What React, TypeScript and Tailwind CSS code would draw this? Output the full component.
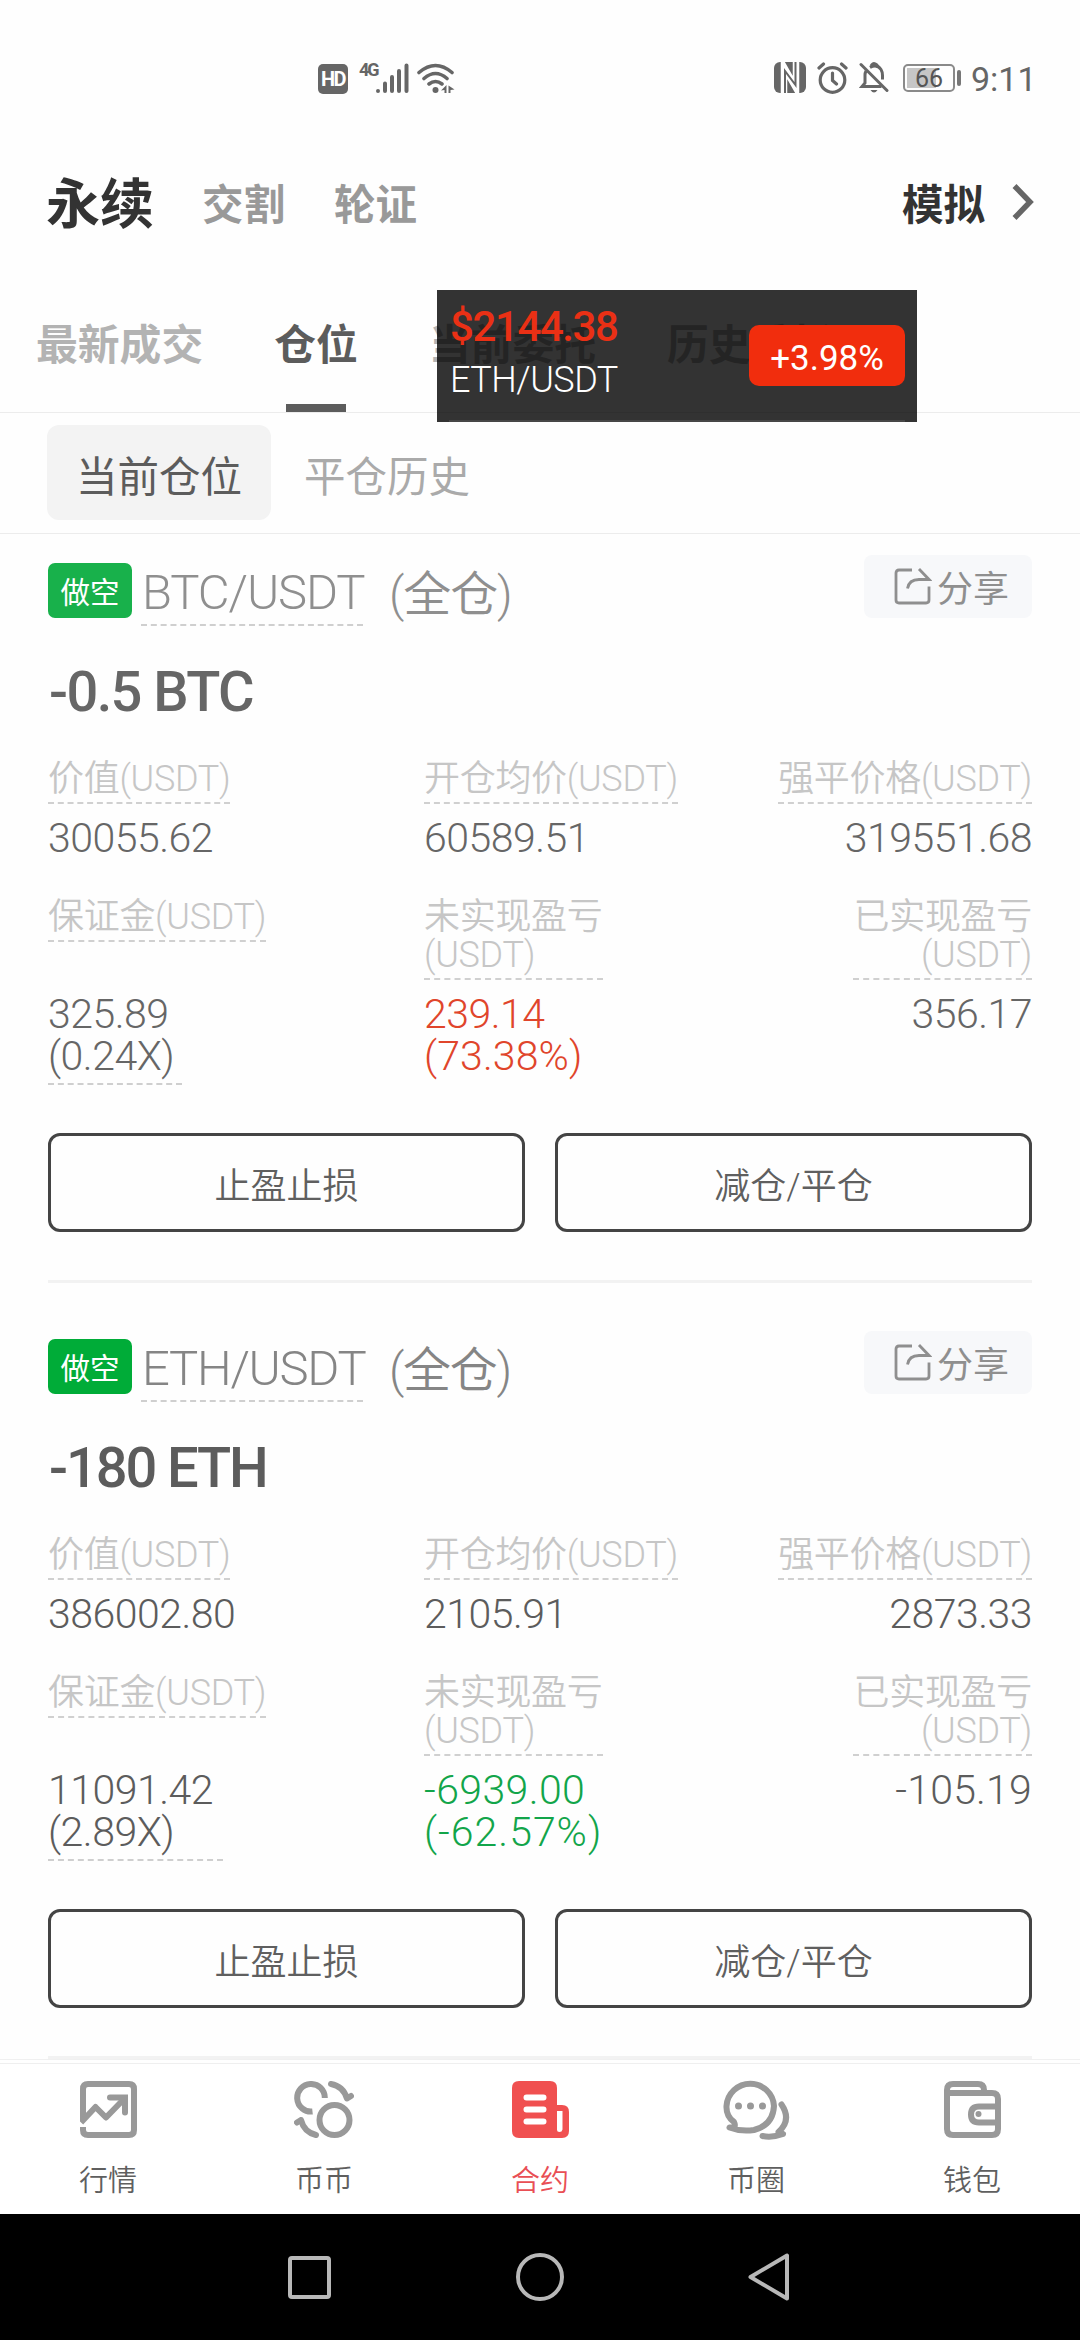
import { ReactNode } from 'react';

type Position = {
  pair: string;
  amount: string;
  badgeClass: string;
  value: string;
  entryPrice: string;
  liqPrice: string;
  margin: string;
  leverage: string;
  marginClass: string;
  unrealized: string;
  unrealizedRate: string;
  pnlClass: string;
  rateClass: string;
  realized: string;
  realizedClass: string;
  pairClass: string;
  amountClass: string;
  numberClass: string;
};

const positions: Position[] = [
  {
    pair: 'BTC/USDT',
    amount: '-0.5 BTC',
    badgeClass: 'bg-[#18b14b]',
    value: '30055.62',
    entryPrice: '60589.51',
    liqPrice: '319551.68',
    margin: '325.89',
    leverage: '(0.24X)',
    marginClass: 'w-[134px]',
    unrealized: '239.14',
    unrealizedRate: '(73.38%)',
    pnlClass: 'text-[#e0452b]',
    rateClass: 'tracking-[0.1px]',
    realized: '356.17',
    realizedClass: '',
    pairClass: 'text-[#8f8f8f] tracking-[-1.1px]',
    amountClass: 'text-[#666] tracking-[-1.6px]',
    numberClass: 'text-[#666]',
  },
  {
    pair: 'ETH/USDT',
    amount: '-180 ETH',
    badgeClass: 'bg-[#00ac38]',
    value: '386002.80',
    entryPrice: '2105.91',
    liqPrice: '2873.33',
    margin: '11091.42',
    leverage: '(2.89X)',
    marginClass: 'w-[175px]',
    unrealized: '-6939.00',
    unrealizedRate: '(-62.57%)',
    pnlClass: 'text-[#12a54a] tracking-[0.4px]',
    rateClass: 'tracking-[1px]',
    realized: '-105.19',
    realizedClass: 'tracking-[0.2px]',
    pairClass: 'text-[#858585] tracking-[-1.3px]',
    amountClass: 'text-[#5c5c5c] tracking-[-2.1px]',
    numberClass: 'text-[#5c5c5c]',
  },
];

function StatusBar() {
  return (
    <div className="flex h-[110px] items-start pt-[62px] text-[#666]">
      <div className="ml-[318px] mt-[2px] flex h-[30px] w-[30px] items-center justify-center rounded-[5px] bg-[#666] text-[20px] font-bold leading-none tracking-[-1.5px] text-white">
        HD
      </div>
      <span className="ml-[11px] w-[17px] text-[18px] font-bold leading-[15px] tracking-[-2px]">4G</span>
      <svg className="mt-px" width="33" height="31" viewBox="0 0 33 31" stroke="currentColor" strokeWidth="4" strokeLinecap="round">
        <path d="M2 28v0M9 28V20.500M16 28V14M23 28V8M30.500 28V2.500" />
      </svg>
      <svg className="ml-[8px] mt-px" width="38" height="31" viewBox="0 0 38 31" fill="none" stroke="currentColor" strokeWidth="3.600" strokeLinecap="round">
        <path d="M2 9.500Q18.500-4.500 35 9.500M7 15.500Q18.500 5.500 30 15.500M12 21Q18.500 16 25 21" />
        <circle cx="18.500" cy="27" r="3" fill="currentColor" stroke="none" />
        <path d="M24 27.500l5.500-5.500v8h-2v-3zM31.500 22.500v7.500h2v-3l4 -.5z" fill="currentColor" stroke="none" />
      </svg>
      {/* NFC */}
      <svg className="ml-[319px]" width="32" height="32" viewBox="0 0 32 32" fill="none">
        <rect width="32" height="31" rx="6" fill="#666" />
        <path d="M10 31V5L22 26V0" stroke="#fff" strokeWidth="6.500" />
        <path d="M11 31V9L21.500 23V0" stroke="#666" strokeWidth="2" />
      </svg>
      <svg className="ml-[11px]" width="31" height="32" viewBox="0 0 31 32" fill="none" stroke="currentColor" strokeWidth="3.200" strokeLinecap="round">
        <circle cx="15.500" cy="18" r="12.300" />
        <path d="M15.500 11v7.500l4 3.500M2 6l4.500-4M29 6l-4.500-4" />
      </svg>
      <svg className="ml-[11px]" width="31" height="32" viewBox="0 0 31 32" fill="none" stroke="currentColor" strokeWidth="3">
        <path d="M2 2.500L28 28.500" strokeLinecap="round" />
        <path d="M22.500 24.500H3l3-3.500V13q0-2 1-4M11 5.500q7-4 11 2q1.500 2.500 1.500 6v4" />
        <path d="M12 4q1.500-3.500 4.500-2t1 3" />
        <path d="M11.500 28h7q-3.500 5-7 0z" fill="currentColor" stroke="none" />
      </svg>
      <div className="ml-[13px] mt-[2px] flex h-[28px] w-[52px] items-center rounded-[5px] border-2 border-[#8a8a8a] p-[2px]">
        <div className="h-full w-[29px] shrink-0 bg-[#c6c6c6]" />
        <span className="-ml-[21px] text-[25px] leading-none text-[#555]">66</span>
      </div>
      <div className="ml-[2px] mt-[8px] h-[16px] w-[4px] rounded-sm bg-[#777]" />
      <span className="ml-[10px] text-[34px] leading-[34px]">9:11</span>
    </div>
  );
}

function Header() {
  return (
    <div className="flex h-[188px] items-center pl-[46px] pr-[46px] pt-1 font-bold">
      <span className="text-[54px] leading-none text-[#333]">永续</span>
      <span className="ml-[48px] text-[41.500px] leading-none text-[#999]">交割</span>
      <span className="ml-[49px] text-[41.500px] leading-none text-[#999]">轮证</span>
      <span className="ml-auto text-[41.500px] leading-none text-[#333]">模拟</span>
      <svg className="-mt-[8px] ml-[27px]" width="22" height="36" viewBox="0 0 22 36" fill="none" stroke="#666" strokeWidth="5.500">
        <path d="M2.500 2L18 18L2.500 34" />
      </svg>
    </div>
  );
}

function Tab({ label, active = false }: { label: string; active?: boolean }) {
  return (
    <div className="flex shrink-0 flex-col items-center">
      <span className={`flex h-[92px] items-center pt-1 text-[41.800px] font-bold leading-none ${active ? 'text-[#5c5c5c]' : 'text-[#b3b3b3]'}`}>
        {label}
      </span>
      {active && <div className="mt-[14px] h-2 w-[60px] bg-[#5c5c5c]" />}
    </div>
  );
}

function PriceFloat() {
  return (
    <div className="absolute left-[437px] top-[290px] flex h-[132px] w-[480px] flex-col bg-black/80 px-3">
      <div className="flex flex-1 items-center justify-between">
        <div className="-mt-1 flex flex-col pl-[1px]">
          <span className="text-[42px] font-medium leading-[53px] tracking-[-1.4px] text-[#ea3015]">$2144.38</span>
          <span className="text-[36px] font-light leading-[54px] tracking-[-0.5px] text-white">ETH/USDT</span>
        </div>
        <div className="flex h-[61px] w-[156px] items-center justify-center rounded-[10px] bg-[#f12d0d] pt-[6px] text-[35px] leading-none text-white">
          +3.98%
        </div>
      </div>
      <div className="h-[2px] bg-[#474747]" />
    </div>
  );
}

function ShareButton() {
  return (
    <div className="ml-auto flex h-[63px] w-[168px] items-center rounded-lg bg-[#f7f8fa] pl-[30px] text-[#8f8f8f]">
      <svg className="-mt-[1px]" width="38" height="37" viewBox="0 0 38 37" fill="none" stroke="currentColor" strokeWidth="2.800">
        <path d="M18 2H5q-3 0-3 3v27q0 3 3 3h27q3 0 3-3V18.500" />
        <path d="M13.500 20.500Q15 11.500 25 11.500h10L25 1" />
      </svg>
      <span className="ml-[5px] pt-[7px] text-[36px] leading-none">分享</span>
    </div>
  );
}

function Label({ children, right = false }: { children: ReactNode; right?: boolean }) {
  return (
    <div
      className={`self-start border-b-2 border-dashed border-[#d0d0d0] pb-1 pt-px text-[36px] font-[350] leading-[38px] tracking-[-0.3px] text-[#c6c6c6] ${
        right ? 'justify-self-end text-right' : 'justify-self-start'
      }`}
    >
      {children}
    </div>
  );
}

function PositionCard({ p }: { p: Position }) {
  return (
    <div className="shrink-0 px-12 pt-[21px]">
      <div className="flex h-[73px] items-start">
        <div className={`mt-2 flex h-[55px] w-[84px] items-center justify-center rounded-[7px] pt-[6px] text-[29.500px] leading-none text-white ${p.badgeClass}`}>
          做空
        </div>
        <div className={`ml-[9px] mt-[6px] w-[222px] whitespace-nowrap border-b-2 border-dashed border-[#cfcfcf] pl-px text-[49px] font-light leading-[63px] ${p.pairClass}`}>
          {p.pair}
        </div>
        <div className={`ml-[26px] mt-2 text-[48px] font-[350] leading-[63px] ${p.pairClass}`}>(全仓)</div>
        <ShareButton />
      </div>
      <div className={`mt-[29px] pl-px text-[56px] font-medium leading-[70px] ${p.amountClass}`}>{p.amount}</div>

      <div className="mt-[32px] grid grid-cols-[376px_304px_304px]">
        <Label>价值(USDT)</Label>
        <Label>开仓均价(USDT)</Label>
        <Label right>强平价格(USDT)</Label>
      </div>
      <div className={`mt-[13px] grid grid-cols-[376px_304px_304px] text-[41px] font-light leading-[42px] tracking-[-0.5px] ${p.numberClass}`}>
        <div>{p.value}</div>
        <div>{p.entryPrice}</div>
        <div className="text-right">{p.liqPrice}</div>
      </div>

      <div className="mt-[38px] grid grid-cols-[376px_304px_304px]">
        <Label>保证金(USDT)</Label>
        <Label>
          未实现盈亏
          <br />
          (USDT)
        </Label>
        <Label right>
          已实现盈亏
          <br />
          (USDT)
        </Label>
      </div>
      <div className={`mt-3 grid h-[93px] grid-cols-[376px_304px_304px] text-[41px] font-light leading-[42px] tracking-[-0.5px] ${p.numberClass}`}>
        <div className={`border-b-2 border-dashed border-[#cfcfcf] pt-px ${p.marginClass}`}>
          {p.margin}
          <br />
          {p.leverage}
        </div>
        <div className={`pt-px ${p.pnlClass}`}>
          {p.unrealized}
          <br />
          <span className={p.rateClass}>{p.unrealizedRate}</span>
        </div>
        <div className={`pt-px text-right ${p.realizedClass}`}>{p.realized}</div>
      </div>

      <div className="mt-12 flex gap-[30px]">
        <button className="h-[99px] flex-1 rounded-[12px] border-3 border-[#444] pt-2 text-[36px] font-[350] text-[#5f5f5f]">止盈止损</button>
        <button className="h-[99px] flex-1 rounded-[12px] border-3 border-[#444] pt-2 text-[36px] font-[350] text-[#5f5f5f]">减仓/平仓</button>
      </div>
      <div className="mb-[27px] mt-12 h-[3px] bg-[#f2f2f2]" />
    </div>
  );
}

function NavItem({ label, active = false, children }: { label: string; active?: boolean; children: ReactNode }) {
  return (
    <div className={`flex flex-1 flex-col items-center pt-[15px] ${active ? 'text-[#f05050]' : 'text-[#999]'}`}>
      <div className="flex h-[61px] items-center justify-center">{children}</div>
      <span className={`mt-[22px] text-[29px] font-[350] leading-[38px] ${active ? 'text-[#e94f55]' : 'text-[#5f5f5f]'}`}>{label}</span>
    </div>
  );
}

function BottomNav() {
  return (
    <div className="h-[155px] shrink-0 border-t border-[#f0f0f0] bg-white pt-[3px]">
      <div className="flex border-t border-[#efefef]">
        <NavItem label="行情">
          <svg width="57" height="57" viewBox="0 0 57 57" fill="none" stroke="currentColor" strokeWidth="6">
            <path d="M3 40V8q0-5 5-5h41q5 0 5 5v41q0 5-5 5H8q-5 0-5-5v-3" />
            <path d="M1 41.500L15.500 26L26 36.500L44 18" strokeLinejoin="round" />
            <path d="M30 16.500h15v15" strokeLinecap="round" />
          </svg>
        </NavItem>
        <NavItem label="币币">
          <svg width="60" height="57" viewBox="0 0 60 57" fill="none" stroke="currentColor" strokeWidth="6">
            <path d="M30.800 17A13.800 13.800 0 1 0 18.500 30.500" />
            <circle cx="40.500" cy="39" r="15" />
            <path d="M37 3Q49 5 53 17.500L57 15" strokeLinecap="round" strokeLinejoin="round" />
            <path d="M22 54Q10 51 7 39L3 41.500" strokeLinecap="round" strokeLinejoin="round" />
          </svg>
        </NavItem>
        <NavItem label="合约" active>
          <svg width="57" height="57" viewBox="0 0 57 57">
            <path fill="currentColor" fillRule="evenodd" d="M7 0h31q7 0 7 7v17h5q7 0 7 7v19q0 7-7 7H7q-7 0-7-7V7q0-7 7-7zM45 30v18.500q0 2.500 2.500 2.500t3-2.500V30z" />
            <path d="M14.500 16.500h17M14.500 28.500h17M14.500 40.500h17" stroke="#fff" strokeWidth="6" strokeLinecap="round" />
          </svg>
        </NavItem>
        <NavItem label="币圈">
          <svg width="67" height="61" viewBox="0 0 67 61" fill="none" stroke="currentColor" strokeWidth="6" strokeLinecap="round" strokeLinejoin="round">
            <path d="M6.500 48.500Q14 49 11 43Q3 37 3.500 27A23.800 23.800 0 0 1 51 27Q50 46 31 51Q18 53 6.500 48.500z" />
            <path d="M58.500 25.500Q69 41 55.500 53L60 55Q49 59 39.500 57" />
            <path d="M15.500 27v0M27.500 27v0M39.500 27v0" strokeWidth="7" />
          </svg>
        </NavItem>
        <NavItem label="钱包">
          <svg width="57" height="57" viewBox="0 0 57 57" fill="none" stroke="currentColor" strokeWidth="6">
            <path d="M3 12V9q0-6 6-6h25q6 0 6 6v3" />
            <path d="M3 10v38q0 6 6 6h39q6 0 6-6V18q0-6-6-6H3M54 25.500H35q-8 0-8 8t8 8h19" />
            <circle cx="34.500" cy="33" r="3" fill="currentColor" stroke="none" />
          </svg>
        </NavItem>
      </div>
    </div>
  );
}

function SystemBar() {
  return (
    <div className="flex h-[126px] shrink-0 items-center bg-black">
      <div className="ml-[288px] h-[43px] w-[43px] rounded-[4px] border-4 border-[#b8b8b8]" />
      <div className="ml-[185px] h-[48px] w-[48px] rounded-full border-4 border-[#b8b8b8]" />
      <svg className="ml-[184px]" width="42" height="48" viewBox="0 0 42 48" fill="none" stroke="#b8b8b8" strokeWidth="4" strokeLinejoin="round">
        <path d="M2.500 24L39 2.500V45.500z" />
      </svg>
    </div>
  );
}

export default function App() {
  return (
    <div className="relative flex h-[2340px] w-[1080px] flex-col overflow-hidden bg-[#fefefe] font-['Roboto','Noto_Sans_CJK_SC',sans-serif]">
      <StatusBar />
      <Header />
      <div className="flex h-[115px] gap-[71px] overflow-hidden border-b border-[#ececec] pl-[36px]">
        <Tab label="最新成交" />
        <Tab label="仓位" active />
        <Tab label="当前委托" />
        <Tab label="历史委托" />
      </div>
      <div className="flex h-[121px] items-start border-b border-[#ececec] pl-[47px] pt-3 text-[41.500px] leading-none">
        <div className="flex h-[95px] w-[224px] items-center justify-center rounded-[12px] bg-[#f3f3f3] pt-[10px] text-[#5c5c5c]">当前仓位</div>
        <div className="ml-[33px] flex h-[95px] items-center pt-[10px] text-[#aaa]">平仓历史</div>
      </div>
      <div className="flex min-h-0 flex-1 flex-col overflow-hidden">
        {positions.map((p) => (
          <PositionCard key={p.pair} p={p} />
        ))}
      </div>
      <BottomNav />
      <SystemBar />
      <PriceFloat />
    </div>
  );
}
